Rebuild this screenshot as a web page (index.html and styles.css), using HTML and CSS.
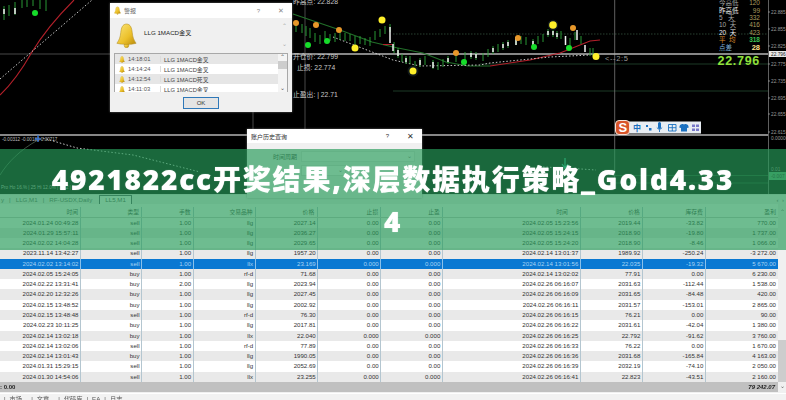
FILE: index.html
```html
<!DOCTYPE html>
<html lang="zh">
<head>
<meta charset="utf-8">
<title>4921822cc开奖结果,深层数据执行策略_Gold4.334</title>
<link rel="stylesheet" href="styles.css">
</head>
<body>
<div class="screen">
  <div class="base">
    <svg class="chart" width="786" height="194" viewBox="0 0 786 194">
      <defs>
        <symbol id="gear" viewBox="-10 -10 20 20">
          <path d="M0-10 2-7 5-8.700 5.500-5.500 8.700-5 7-2 10 0 7 2 8.700 5 5.500 5.500 5 8.700 2 7 0 10-2 7-5 8.700-5.500 5.500-8.700 5-7 2-10 0-7-2-8.700-5-5.500-5.500-5-8.700-2-7Z"/>
        </symbol>
        <symbol id="arrow" viewBox="0 0 11 12">
          <path d="M5.500 0 11 6H7.500V12H3.500V6H0Z"/>
        </symbol>
      </defs>
      <g class="grid">
        <path d="M253 112V135M305 0V135M0 54H110"/>
        <path class="grid-green" d="M480 64H768M393 91H768M615 175.500H768M615 183H768"/>
        <path class="grid-dot" d="M393 34H768"/>
        <path class="grid-v" d="M614.700 0V181M768.500 0V194"/>
        <path class="grid-bright" d="M292 54H768M0 135H768"/>
      </g>
      <path class="line-red" d="M0 95C14 82 24 66 32 52C44 32 58 16 74 0"/>
      <path class="line-dot" d="M0 79 92 0"/>
      <path class="line-green" d="M293 14 340 30 372 42 393 47 423 53 446 62 468 66H490"/>
      <path class="line-red" d="M490 66 530 60 560 53 575 47 590 41 600 40M383 44.500H392"/>
      <path class="line-dot" d="M333 37 393 60 420 66 480 65 490 63 550 57 590 55"/>
      <path class="wick" d="M4 6V20M9 5V16M15 2V15M22 0V8M27 0V7M33 0V6M40 0V9M46 0V11M296 22V32M302 24V33M306 26V36M310 28V38M315 33V42M320 35V44M325 31V39M330 34V41M335 33V42M340 31V40M345 33V41M350 34V41M355 36V46M360 36V44M365 38V45M370 37V46M375 31V40M380 29V37M385 26V34M390 24V32M394 42V53M398 48V58M402 54V62M406 56V64M410 56V64M415 61V69M420 58V67M425 56V65M433 60V69M438 62V70M443 59V67M448 56V64M456 54V62M465 52V60M471 51V59M476 52V60M483 53V61M488 49V57M493 46V54M498 44V52M503 42V50M508 40V48M516 37V45M521 36V44M526 37V45M533 39V47M538 36V44M543 34V42M548 29V37M553 29V37M557 31V39M561 31V39M570 38V46M575 32V40M581 36V44M590 48V56M593 48V56"/>
      <path class="body" d="M15 8V14M4 9V14M393 44V51M398 50V56M406 58V62M420 60V65M433 62V68M448 58V62M471 53V57M476 54V58M493 48V52M503 44V48M508 42V46M516 37V45M533 41V45M548 31V35M553 31V35M390 27V43M557 33V37M565.500 36V45M577 30V40M585 45V52"/>
      <g class="dot-orange"><circle cx="296" cy="23" r="3"/><circle cx="316" cy="25" r="3"/><circle cx="339" cy="30" r="3"/><circle cx="456" cy="53" r="3"/><circle cx="518" cy="38" r="3"/><circle cx="573" cy="28" r="3"/></g>
      <g class="dot-green"><circle cx="35" cy="13" r="3"/><circle cx="308" cy="45" r="3"/><circle cx="327" cy="41" r="3"/><circle cx="464" cy="62" r="3"/><circle cx="534" cy="47" r="3"/><circle cx="569" cy="48" r="3"/></g>
      <use href="#gear" class="gear-teal" x="405" y="63" width="16" height="16"/>
      <use href="#gear" class="gear-red" x="546" y="18" width="14" height="14"/>
      <g class="gear-hole"><circle cx="553" cy="25" r="5.200"/><circle cx="413" cy="71" r="5.500"/></g>
      <g class="gear-core"><circle cx="553" cy="25" r="3.800"/><circle cx="413" cy="71" r="3.500"/></g>
      <g class="dot-yellow"><circle cx="355" cy="48" r="3.500"/><circle cx="382" cy="20" r="3.500"/><circle cx="596" cy="56.500" r="3.500"/></g>
      <g class="arrow-red">
        <use href="#arrow" x="310" y="37" width="10" height="11"/>
        <use href="#arrow" x="365" y="38" width="10" height="11"/>
        <use href="#arrow" x="498" y="46" width="10" height="11"/>
      </g>
      <g class="chart-label">
        <text x="293" y="4">昨高点: 22.828</text>
        <text x="293" y="59">开仓价: 22.799</text>
        <text x="297" y="70">止损: 22.774</text>
        <text x="293" y="97">止盈出: | 22.71</text>
        <text x="605" y="61" class="ratio">&lt;--2:5</text>
      </g>
      <g class="stats">
        <text x="719" y="5">今高低</text><text x="760" y="5" class="num">120</text>
        <text x="719" y="13" class="bright">昨高低</text><text x="760" y="13" class="num">99</text>
        <text x="719" y="20">5&#160;&#160;&#160;天</text><text x="760" y="20" class="num">332</text>
        <text x="719" y="27">10&#160;&#160;天</text><text x="760" y="27" class="num">416</text>
        <text x="719" y="35" class="bright">20&#160;&#160;天</text><text x="760" y="35" class="num">423</text>
        <text x="719" y="42" class="orange">平&#160;&#160;均</text><text x="760" y="42" class="num green">318</text>
        <text x="719" y="50" class="steel">点差</text><text x="760" y="50" class="num yellow">28</text>
      </g>
      <text x="760" y="64.500" class="price">22.796</text>
      <path class="tick" d="M768 12h2M768 29h2M768 46h2M768 64h2M768 81h2M768 98h2M768 114h2M768 132h2"/>
      <g class="axis">
        <text x="771" y="14">22.885</text><text x="771" y="31">22.855</text><text x="771" y="48">22.825</text>
        <text x="771" y="66">22.775</text><text x="771" y="83">22.735</text><text x="771" y="100">22.695</text>
        <text x="771" y="116">22.655</text><text x="771" y="134">22.615</text><text x="771" y="140">0.00000</text>
        <text x="771" y="171">0.01</text>
      </g>
      <rect class="axis-now" x="769" y="51" width="17" height="6"/>
      <text x="771" y="56" class="axis-now-text">22.796</text>
      <rect class="axis-macd" x="769" y="172" width="17" height="8"/>
      <text x="771" y="178" class="axis-now-text">-0.007</text>
      <text x="2" y="141" class="sub-label">-0.00312 -0.00183 0.00717</text>
      <path class="sub-line" d="M0 175C8 162 20 150 38 140"/>
      <path class="line-dot" d="M43 138 77 148 133 155 200 172M543 167 566 168 596 170"/>
      <path class="sub-blue" d="M38 135V142M35 139H41"/>
      <path class="sub-teal" d="M565 158V168M562 164 565 168 568 164"/>
      <text x="1" y="189" class="sub-label">Pro Ho 16.% | 25 Hi 12.0% | 37.2 | 0.00</text>
      <g class="ime">
        <rect x="622" y="121.500" width="79" height="12" class="ime-bar"/>
        <rect x="615.500" y="120.500" width="14" height="14" rx="3.500" class="ime-logo"/>
        <text x="618.500" y="132" class="ime-s">S</text>
        <text x="633" y="131" class="ime-zh">中</text>
        <path class="ime-fill" d="M646 125h2v2h-2zM649 128h2.500v2.500h-2.500zM658 123.500a1.500 1.500 0 0 1 3 0v4a1.500 1.500 0 0 1-3 0zM680 125l2-1h1.500l.5 1 .5-1h1.500l2 1 .8 2.500-1.800.5v3.500h-6v-3.500l-1.800-.5z"/>
        <path class="ime-stroke" d="M656.800 127.500q2.700 3.500 5.400 0M659.500 129.500v2.500M668.500 124.500h7.500v6.500h-7.500zM668.500 127.700h7.500M672.300 124.500v6.500"/>
        <path class="ime-grid" d="M692 124.500h3v2.500h-3zM696 124.500h3v2.500h-3zM692 128.500h3v2.500h-3zM696 128.500h3v2.500h-3z"/>
      </g>
    </svg>

    <div class="window alert">
      <div class="win-title">
        <svg class="bell-small" viewBox="0 0 20 24"><use href="#bell-shape"/></svg>
        <span class="win-name">警报</span>
        <span class="win-help">?</span>
        <span class="win-close">✕</span>
      </div>
      <div class="alert-msg">
        <svg class="bell-big" viewBox="0 0 20 24">
          <defs>
            <linearGradient id="gold" x1="0" x2="1" y1="0" y2="1">
              <stop offset="0" stop-color="#fbe67a"/><stop offset=".6" stop-color="#ecc02a"/><stop offset="1" stop-color="#b98a0c"/>
            </linearGradient>
            <g id="bell-shape" fill="url(#gold)" stroke="#b08a18" stroke-width=".5">
              <circle cx="10" cy="21.500" r="2.200"/>
              <path d="M10 1C6 1 5 5 4.500 9C4 14 3 16 .800 19.500C6 21 14 21 19.200 19.500C17 16 16 14 15.500 9C15 5 14 1 10 1Z"/>
            </g>
          </defs>
          <use href="#bell-shape"/>
        </svg>
        <span class="alert-text">LLG 1MACD金叉</span>
        <span class="alert-arrows"><i>⌃</i><i>⌄</i></span>
      </div>
      <div class="alert-list">
        <div class="alert-rows">
          <div class="alert-row"><svg class="bell-tiny" viewBox="0 0 20 24"><use href="#bell-shape"/></svg><span class="alert-time">14:18:01</span><span>LLG 1MACD金叉</span></div>
          <div class="alert-row"><svg class="bell-tiny" viewBox="0 0 20 24"><use href="#bell-shape"/></svg><span class="alert-time">14:14:24</span><span>LLG 1MACD金叉</span></div>
          <div class="alert-row"><svg class="bell-tiny" viewBox="0 0 20 24"><use href="#bell-shape"/></svg><span class="alert-time">14:12:54</span><span>LLG 1MACD死叉</span></div>
          <div class="alert-row"><svg class="bell-tiny" viewBox="0 0 20 24"><use href="#bell-shape"/></svg><span class="alert-time">14:11:03</span><span>LLG 1MACD金叉</span></div>
        </div>
        <div class="alert-scroll"><i>⌃</i><b></b><i>⌄</i></div>
      </div>
      <div class="alert-foot"><span class="ok">OK</span></div>
    </div>

    <div class="window history">
      <div class="win-title hist-title">
        <span class="win-name">账户历史查询</span>
        <span class="win-help">?</span>
        <span class="win-close">✕</span>
      </div>
      <div class="hist-row"><span class="hist-label">时间周期</span><span class="hist-input">⌄</span></div>
      <div class="hist-row hist-row-2"><span class="hist-select">⌄</span></div>
    </div>

    <section class="terminal">
      <div class="tabs">
        <span>y</span><span class="tab-sep">|</span><span>LLG,M1</span><span class="tab-sep">|</span><span>RF-USDX,Daily</span><span class="tab-on">LL5,M1</span>
        <span class="tab-nav">‹&#160;&#160;›</span>
      </div>
      <div class="table">
        <div class="rows">
          <div class="row head"><span>时间</span><span>类型</span><span>手数</span><span>交易品种</span><span>价格</span><span>止损</span><span>止盈</span><span>时间</span><span>价格</span><span>库存费</span><span>盈利</span></div>
          <div class="row"><span>2024.01.24 00:49:28</span><span>sell</span><span>1.00</span><span>llg</span><span>2027.14</span><span>0.00</span><span>0.00</span><span>2024.02.05 15:23:56</span><span>2019.44</span><span>-33.82</span><span>770.00</span></div>
          <div class="row even"><span>2024.01.29 15:57:11</span><span>sell</span><span>1.00</span><span>llg</span><span>2036.27</span><span>0.00</span><span>0.00</span><span>2024.02.05 15:24:15</span><span>2018.90</span><span>-19.80</span><span>1 737.00</span></div>
          <div class="row"><span>2024.02.02 14:04:28</span><span>sell</span><span>1.00</span><span>llg</span><span>2029.65</span><span>0.00</span><span>0.00</span><span>2024.02.05 15:24:20</span><span>2018.90</span><span>-8.46</span><span>1 066.00</span></div>
          <div class="row even"><span>2023.11.14 13:42:27</span><span>sell</span><span>1.00</span><span>llg</span><span>1957.20</span><span>0.00</span><span>0.00</span><span>2024.02.14 13:01:37</span><span>1989.92</span><span>-250.24</span><span>-3 272.00</span></div>
          <div class="row selected"><span>2024.02.02 13:14:02</span><span>sell</span><span>1.00</span><span>llx</span><span>23.169</span><span>0.000</span><span>0.000</span><span>2024.02.14 13:01:56</span><span>22.035</span><span>-19.32</span><span>5 670.00</span></div>
          <div class="row even"><span>2024.02.05 15:24:05</span><span>buy</span><span>1.00</span><span>rf-d</span><span>71.68</span><span>0.00</span><span>0.00</span><span>2024.02.14 13:02:02</span><span>77.91</span><span>0.00</span><span>6 230.00</span></div>
          <div class="row"><span>2024.02.22 13:31:41</span><span>buy</span><span>2.00</span><span>llg</span><span>2023.94</span><span>0.00</span><span>0.00</span><span>2024.02.26 06:16:07</span><span>2031.63</span><span>-112.44</span><span>1 538.00</span></div>
          <div class="row even"><span>2024.02.20 12:32:26</span><span>buy</span><span>1.00</span><span>llg</span><span>2027.45</span><span>0.00</span><span>0.00</span><span>2024.02.26 06:16:09</span><span>2031.65</span><span>-84.48</span><span>420.00</span></div>
          <div class="row"><span>2024.02.15 13:48:52</span><span>buy</span><span>1.00</span><span>llg</span><span>2002.92</span><span>0.00</span><span>0.00</span><span>2024.02.26 06:16:11</span><span>2031.57</span><span>-153.01</span><span>2 865.00</span></div>
          <div class="row even"><span>2024.02.15 13:48:48</span><span>sell</span><span>1.00</span><span>rf-d</span><span>76.30</span><span>0.00</span><span>0.00</span><span>2024.02.26 06:16:15</span><span>76.21</span><span>0.00</span><span>90.00</span></div>
          <div class="row"><span>2024.02.23 10:11:25</span><span>buy</span><span>1.00</span><span>llg</span><span>2017.81</span><span>0.00</span><span>0.00</span><span>2024.02.26 06:16:22</span><span>2031.61</span><span>-42.04</span><span>1 380.00</span></div>
          <div class="row even"><span>2024.02.14 13:02:18</span><span>buy</span><span>1.00</span><span>llx</span><span>22.040</span><span>0.000</span><span>0.000</span><span>2024.02.26 06:16:25</span><span>22.792</span><span>-91.62</span><span>3 760.00</span></div>
          <div class="row"><span>2024.02.14 13:02:06</span><span>sell</span><span>1.00</span><span>rf-d</span><span>77.89</span><span>0.00</span><span>0.00</span><span>2024.02.26 06:16:33</span><span>76.22</span><span>0.00</span><span>1 670.00</span></div>
          <div class="row even"><span>2024.02.14 13:01:43</span><span>buy</span><span>1.00</span><span>llg</span><span>1990.05</span><span>0.00</span><span>0.00</span><span>2024.02.26 06:16:36</span><span>2031.68</span><span>-165.84</span><span>4 163.00</span></div>
          <div class="row"><span>2024.01.31 15:29:15</span><span>sell</span><span>1.00</span><span>llg</span><span>2052.69</span><span>0.00</span><span>0.00</span><span>2024.02.26 06:16:39</span><span>2032.19</span><span>-74.10</span><span>2 050.00</span></div>
          <div class="row even"><span>2024.01.30 14:54:06</span><span>sell</span><span>1.00</span><span>llx</span><span>23.255</span><span>0.000</span><span>0.000</span><span>2024.02.26 06:16:41</span><span>22.823</span><span>-43.51</span><span>2 160.00</span></div>
          <div class="total"><span class="total-left">: 0.00</span><span class="total-right">79 242.07</span></div>
        </div>
        <div class="scroll"><i>⌃</i><b></b><i>⌄</i></div>
      </div>
      <div class="tabs bottom-tabs">
        <span class="tab-sep">|</span><span>市场...</span><span class="tab-sep">|</span><span>文章...</span><span class="tab-sep">|</span><span>代码库</span><span class="tab-sep">|</span><span>EA</span><span class="tab-sep">|</span><span>日志</span>
      </div>
    </section>
  </div>

  <div class="banner">
    <h1>4921822cc开奖结果,深层数据执行策略_Gold4.334</h1>
  </div>
</div>
</body>
</html>
```
FILE: styles.css
```css
* { box-sizing: border-box; }
html, body { margin: 0; padding: 0; background: #000; }
body { width: 786px; height: 400px; overflow: hidden; }
.screen { position: relative; width: 786px; height: 400px; overflow: hidden; background: #000; font-family: "Liberation Sans", "Noto Sans CJK SC", sans-serif; }
.base { width: 786px; height: 400px; display: flex; flex-direction: column; filter: blur(.45px); }

/* chart */
.chart { display: block; flex: none; background: #000; }
.chart path { fill: none; }
.chart text { font-family: "Liberation Sans", "Noto Sans CJK SC", sans-serif; font-size: 6.5px; fill: #bbb; }
.grid path { stroke: #5a5a5a; stroke-width: .8; }
.grid .grid-green { stroke: #254a30; }
.grid .grid-dot { stroke: #33503c; stroke-dasharray: 1.500 1.500; }
.grid .grid-v { stroke: #777; }
.grid .grid-bright { stroke: #b4b4b4; stroke-width: 1.6; }
.line-red { stroke: #b3202a; stroke-width: 1.1; }
.line-green { stroke: #22702a; stroke-width: 1.1; }
.line-dot { stroke: #ddd; stroke-width: .9; stroke-dasharray: 1.500 2; }
.wick { stroke: #2ea83a; stroke-width: .9; }
.body { stroke: #f4f4f4; stroke-width: 1.5; }
.dot-orange { fill: #e8982a; }
.dot-green { fill: #16dc2a; }
.dot-yellow { fill: #fff02a; }
.gear-hole { fill: #10181a; }
.gear-core { fill: #fff02a; }
.gear-teal { fill: #35b8c8; }
.gear-red { fill: #9a2420; }
.arrow-red { fill: #e01414; }
.chart-label text { fill: #c8c8c8; font-size: 6.800px; }
.chart-label .ratio { fill: #999; font-size: 7.500px; letter-spacing: .6px; }
.stats text { fill: #a8a8a8; font-size: 6.500px; }
.stats .bright { fill: #eee; }
.stats .orange { fill: #d88a2a; }
.stats .steel { fill: #7fb0d8; }
.stats .num { text-anchor: end; fill: #a89a5c; }
.stats .green { fill: #3cc050; font-weight: 700; }
.stats .yellow { fill: #ffe08a; font-weight: 700; font-size: 7.500px; }
.chart .price { text-anchor: end; font-size: 12.500px; font-weight: 700; fill: #8fe03c; letter-spacing: .7px; }
.tick { stroke: #999; stroke-width: .8; }
.chart .axis text { font-size: 4.800px; fill: #999; }
.axis-now { fill: #e8e8e8; }
.chart .axis-now-text { font-size: 4.800px; fill: #222; }
.axis-macd { fill: #5aa878; }
.chart .sub-label { font-size: 4.600px; fill: #bbb; }
.sub-line { stroke: #6a8a70; stroke-width: .6; }
.sub-blue { stroke: #3a78d8; stroke-width: 1.4; }
.sub-teal { stroke: #30c0a0; stroke-width: 1.2; }
.ime-bar { fill: #e8edf2; }
.ime-logo { fill: #d8552a; stroke: #f3e2d8; stroke-width: 1; }
.chart .ime-s { fill: #fff; font-size: 13px; font-weight: 700; }
.chart .ime-zh { fill: #1a70c0; font-size: 8px; font-weight: 700; }
.chart .ime-fill { fill: #1a70c0; }
.chart .ime-stroke { stroke: #1a70c0; stroke-width: .9; }
.chart .ime-grid { fill: #7878c8; }

/* floating windows */
.window { position: absolute; background: #f0f0f0; box-shadow: 0 0 2px rgba(130,130,130,.8); }
.win-title { height: 15px; background: #fff; display: flex; align-items: center; color: #777; font-size: 6px; }
.win-name { color: #666; }
.win-help { margin-left: auto; color: #888; }
.win-close { color: #888; font-size: 7px; margin-left: 18px; margin-right: 8px; }
.alert { left: 110px; top: 3px; width: 182px; height: 109px; }
.alert .win-title { padding-left: 4px; }
.bell-small { width: 7px; height: 9px; margin-right: 3px; }
.alert-msg { height: 35px; display: flex; position: relative; padding-left: 6px; padding-top: 5px; }
.bell-big { width: 21px; height: 25px; }
.alert-text { font-size: 6.200px; color: #222; margin-left: 7px; margin-top: 5px; }
.alert-arrows { margin-left: auto; margin-right: 5px; display: flex; flex-direction: column; justify-content: space-between; height: 24px; color: #aaa; font-size: 6px; line-height: 6px; }
.alert-arrows i, .alert-scroll i, .scroll i { font-style: normal; text-align: center; }
.alert-list { margin: 0 4px; height: 39px; display: flex; border: 1px solid #a8a8a8; border-bottom: 0; background: #fff; overflow: hidden; }
.alert-rows { flex: 1; display: flex; flex-direction: column; }
.alert-row { height: 10px; flex: none; display: flex; align-items: center; font-size: 5.800px; color: #444; padding-left: 4px; }
.alert-row:nth-child(odd) { background: #e6e6e6; }
.bell-tiny { width: 6px; height: 7px; flex: none; }
.alert-time { width: 34px; margin-left: 2px; padding-left: 1px; border-right: 1px solid #ddd; margin-right: 3px; color: #555; }
.alert-scroll { width: 9px; flex: none; background: #f4f4f4; display: flex; flex-direction: column; color: #555; font-size: 6px; line-height: 7px; }
.alert-scroll b { height: 8px; background: #cdcdcd; flex: none; }
.alert-scroll i:last-child { margin-top: auto; }
.alert-foot { display: flex; justify-content: flex-end; padding-right: 73px; padding-top: 5px; }
.ok { width: 36px; height: 12px; border: 1px solid #2f78b8; background: #e4e4e4; font-size: 6px; color: #333; display: flex; align-items: center; justify-content: center; }
.history { left: 247px; top: 129px; width: 175px; height: 69px; }
.hist-title { padding-left: 4px; height: 14px; }
.hist-title .win-name { color: #333; }
.hist-title .win-help { color: #333; }
.hist-title .win-close { color: #333; font-size: 8px; }
.hist-row { display: flex; align-items: center; height: 11px; margin-top: 8px; font-size: 6px; color: #444; padding-left: 26px; }
.hist-label { width: 28px; }
.hist-input { width: 114px; height: 11px; background: #f8f8f8; border: 1px solid #e0e0e0; color: #777; text-align: right; padding-right: 2px; line-height: 8px; }
.hist-row-2 { margin-top: 3px; padding-left: 54px; }
.hist-select { width: 45px; height: 11px; background: #fff; border: 1px solid #ddd; color: #777; text-align: right; padding-right: 2px; line-height: 8px; }

/* terminal table */
.terminal { flex: 1; display: flex; flex-direction: column; background: #f0f0f0; min-height: 0; }
.tabs { height: 10px; flex: none; display: flex; align-items: center; gap: 5px; font-size: 6.200px; line-height: 8px; color: #666; border-top: 1px solid #ddd; padding-left: 1px; }
.tab-on { border: 1px solid #556; border-bottom: 0; height: 10px; padding: 0 5px; margin-left: 2px; background: #fff; color: #555; line-height: 8px; }
.tab-nav { margin-left: auto; margin-right: 2px; color: #666; }
.table { display: flex; flex: none; }
.rows { width: 778px; flex: none; }
.row { height: 10.270px; display: grid; grid-template-columns: 81px 61px 51.600px 62px 62.600px 63px 61.600px 138px 62px 63px 72.200px; background: #fff; font-size: 6.100px; color: #333; line-height: 10.270px; }
.row span { text-align: right; padding-right: 1.500px; border-right: 1px solid #b4c6d0; white-space: nowrap; overflow: hidden; }
.row span:last-child { border-right: 0; padding-right: 2px; }
.even { background: #e9e9e9; }
.selected { background: #0a78d2; color: #a8d4f4; }
.selected span { border-right-color: #8ac0ea; }
.head { height: 13.600px; padding-top: 3.300px; background: #fff; color: #444; border-bottom: 1px solid #ccc; font-size: 5.800px; }
.head span { padding-right: 2px; }
.head span:nth-child(5) { padding-right: 3px; }
.head span:nth-child(8) { padding-right: 12px; }
.total { height: 10.270px; background: #c0c0c0; display: flex; justify-content: space-between; font-size: 6px; line-height: 10.270px; color: #222; font-weight: 700; }
.total-right { font-style: italic; padding-right: 3px; }
.scroll { width: 8px; flex: none; background: #f0f0f0; display: flex; flex-direction: column; color: #666; font-size: 6px; line-height: 8px; padding-top: 4px; }
.scroll b { height: 42px; background: #cdcdcd; margin-top: auto; flex: none; }
.scroll i:last-child { height: 10px; }
.bottom-tabs { margin-top: 1px; border-top: 1px solid #fff; height: 7px; flex: 1; color: #555; gap: 4px; padding-left: 4px; padding-top: 3px; background: #f2f2f2; }

/* overlay banner */
.banner { position: absolute; left: 0; top: 149px; width: 786px; height: 101px; padding: 8.500px 45px; background: rgba(39, 155, 90, .67); }
.banner h1 { margin: 0; font-family: "Open Sans", "Noto Sans CJK SC", sans-serif; font-size: 28px; font-weight: 800; line-height: 42px; letter-spacing: 1.800px; color: #fff; text-align: center; word-break: break-all; text-shadow: 0 0 1px rgba(255,255,255,.6); }
```
